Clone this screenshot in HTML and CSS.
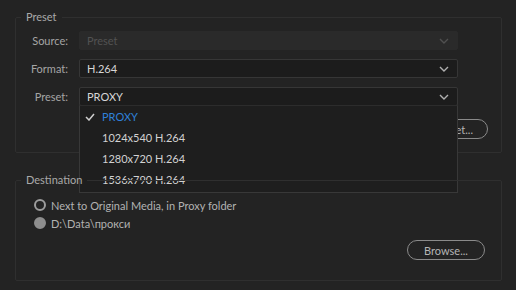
FILE: index.html
```html
<!DOCTYPE html>
<html>
<head>
<meta charset="utf-8">
<link rel="stylesheet" href="styles.css">
</head>
<body>
<div class="dialog">
  <fieldset class="group group-preset">
    <legend>Preset</legend>
    <div class="rows">
      <div class="row">
        <span class="label">Source:</span>
        <div class="select disabled"><span>Preset</span><svg class="chev" width="10" height="6" viewBox="0 0 10 6"><polyline points="1,1 5,5 9,1"/></svg></div>
      </div>
      <div class="row">
        <span class="label">Format:</span>
        <div class="select"><span>H.264</span><svg class="chev" width="10" height="6" viewBox="0 0 10 6"><polyline points="1,1 5,5 9,1"/></svg></div>
      </div>
      <div class="row">
        <span class="label">Preset:</span>
        <div class="select"><span>PROXY</span><svg class="chev" width="10" height="6" viewBox="0 0 10 6"><polyline points="1,1 5,5 9,1"/></svg></div>
      </div>
    </div>
    <div class="actions actions-preset">
      <button class="pill">Add Ingest Preset...</button>
    </div>
    <ul class="menu">
      <li class="item selected"><svg class="check" width="10" height="8" viewBox="0 0 10 8"><polyline points="1,4 4,7 9,1"/></svg><span>PROXY</span></li>
      <li class="item"><span>1024x540 H.264</span></li>
      <li class="item"><span>1280x720 H.264</span></li>
      <li class="item"><span>1536x790 H.264</span></li>
    </ul>
  </fieldset>

  <fieldset class="group group-dest">
    <legend>Destination</legend>
    <div class="radios">
      <div class="radio"><span class="dot"></span><span>Next to Original Media, in Proxy folder</span></div>
      <div class="radio"><span class="dot filled"></span><span>D:\Data\прокси</span></div>
    </div>
    <div class="actions actions-dest">
      <button class="pill">Browse...</button>
    </div>
  </fieldset>
</div>
</body>
</html>
```

FILE: styles.css
```css
html, body {
  margin: 0;
  padding: 0;
  background: #232323;
}
body {
  width: 516px;
  height: 290px;
  overflow: hidden;
  font-family: Lato, "Liberation Sans", sans-serif;
  font-size: 11px;
  color: #a9a9a9;
}
.dialog {
  padding: 10px 14px 0 15px;
  display: flex;
  flex-direction: column;
  gap: 20px;
}
.group {
  position: relative;
  margin: 0;
  min-width: 0;
  border: 1px solid #2f2f2f;
  border-radius: 2px;
}
.group legend {
  padding: 0 5px;
  margin-left: 5px;
  line-height: 14px;
  color: #a9a9a9;
}
.group-preset {
  padding: 7px 0 13px 0;
}
.rows {
  display: flex;
  flex-direction: column;
  gap: 9px;
}
.row {
  display: grid;
  grid-template-columns: 52px 379px;
  column-gap: 11px;
  align-items: center;
}
.label {
  text-align: right;
  color: #a5a5a5;
}
.select {
  box-sizing: border-box;
  height: 19px;
  display: flex;
  align-items: center;
  justify-content: space-between;
  padding: 0 8px 0 7px;
  background: #1c1c1c;
  border: 1px solid #363636;
  border-radius: 2px;
  color: #d6d6d6;
}
.select.disabled {
  background: #2a2a2a;
  border-color: #2a2a2a;
  color: #525252;
}
.chev {
  fill: none;
  stroke: #b0b0b0;
  stroke-width: 1.4;
}
.select.disabled .chev {
  stroke: #505050;
}
.actions {
  display: flex;
  justify-content: flex-end;
}
.actions-preset {
  margin-top: 13px;
  padding-right: 13px;
}
.pill {
  box-sizing: border-box;
  height: 20px;
  padding: 0 14px;
  background: transparent;
  border: 1px solid #8a8a8a;
  border-radius: 10px;
  font-family: inherit;
  font-size: 11px;
  color: #b5b5b5;
}
.menu {
  position: absolute;
  left: 63px;
  top: 81px;
  width: 379px;
  box-sizing: border-box;
  margin: 0;
  padding: 0 0 2px 0;
  list-style: none;
  background: #1e1e1e;
  border: 1px solid #383838;
  border-top-color: #2c2c2c;
}
.item {
  height: 21px;
  display: flex;
  align-items: center;
  padding-left: 22px;
  color: #d2d2d2;
  position: relative;
}
.item.selected {
  color: #2f80d8;
}
.check {
  position: absolute;
  left: 5px;
  top: 7px;
  fill: none;
  stroke: #cfcfcf;
  stroke-width: 1.5;
}
.group-dest {
  padding: 11px 0 16px 0;
  height: 79px;
  box-sizing: content-box;
}
.radios {
  display: flex;
  flex-direction: column;
  gap: 4px;
  padding-left: 18px;
}
.radio {
  display: flex;
  align-items: center;
  gap: 5px;
  height: 14px;
  color: #b2b2b2;
}
.dot {
  box-sizing: border-box;
  width: 12px;
  height: 12px;
  border-radius: 50%;
  border: 2px solid #9c9c9c;
}
.dot.filled {
  background: #8e8e8e;
  border-color: #8e8e8e;
}
.actions-dest {
  margin-top: 10px;
  padding-right: 16px;
}
.actions-dest .pill {
  width: 78px;
}
```
